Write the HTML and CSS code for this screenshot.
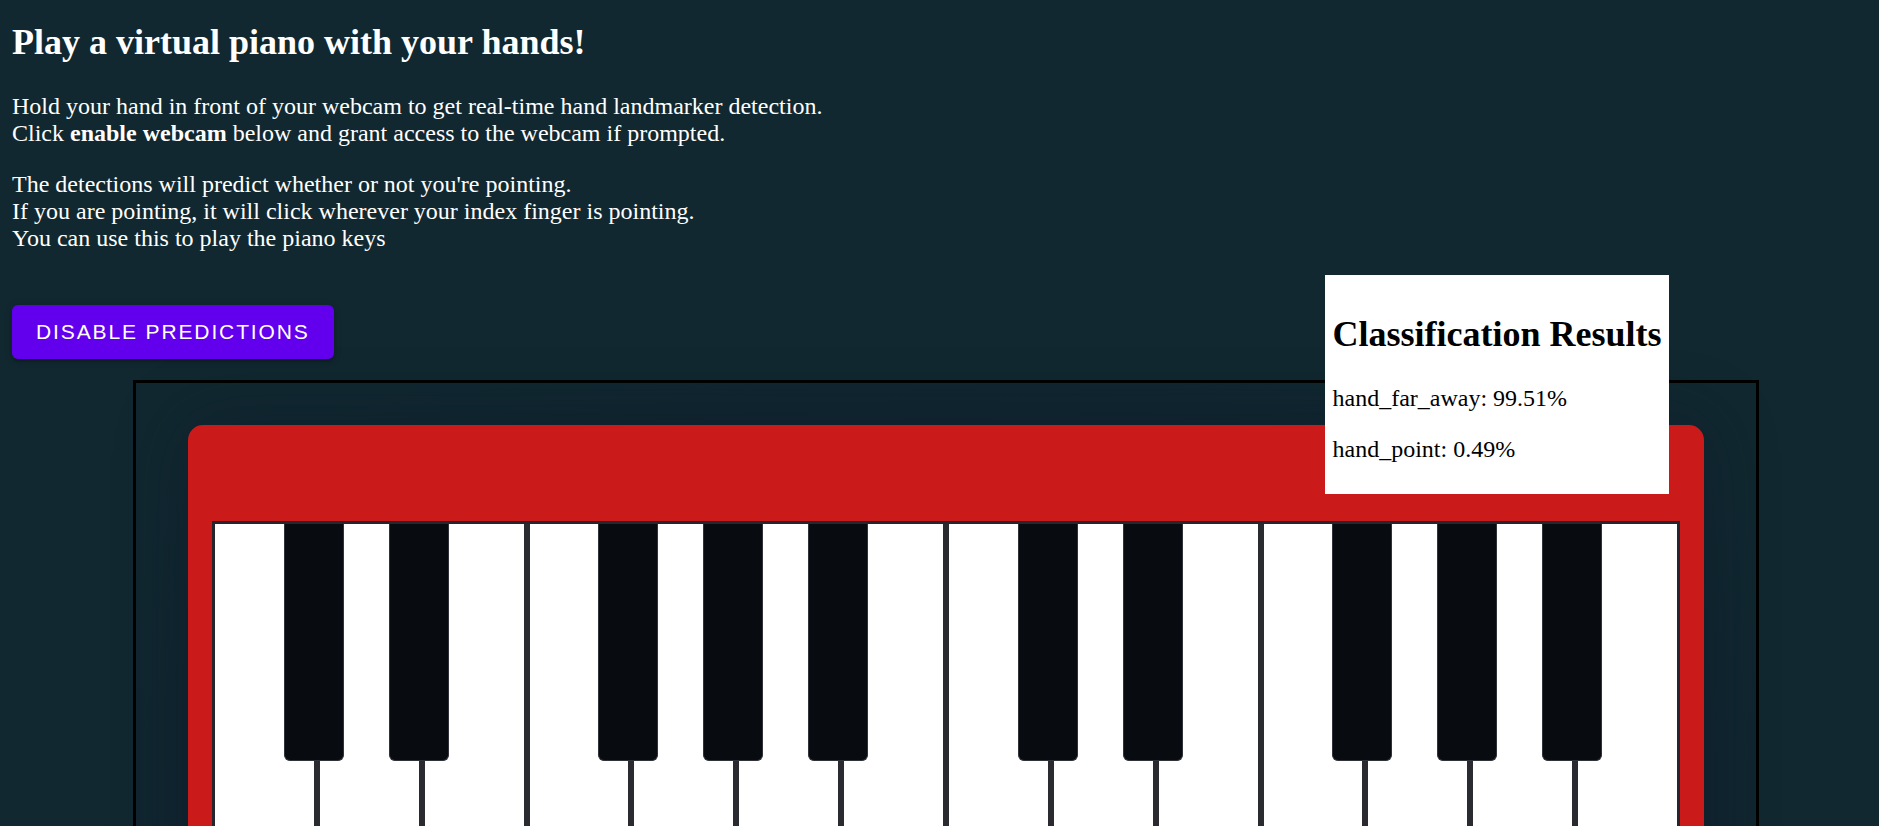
FILE: index.html
```html
<!DOCTYPE html>
<html lang="en">
<head>
<meta charset="utf-8">
<title>Virtual Piano</title>
<link rel="stylesheet" href="styles.css">
</head>
<body>
<main class="page">
  <h2 class="title">Play a virtual piano with your hands!</h2>
  <p class="intro">Hold your hand in front of your webcam to get real-time hand landmarker detection.<br>Click <b>enable webcam</b> below and grant access to the webcam if prompted.</p>
  <p class="intro">The detections will predict whether or not you're pointing.<br>If you are pointing, it will click wherever your index finger is pointing.<br>You can use this to play the piano keys</p>
  <div class="controls">
    <button class="btn">Disable predictions</button>
  </div>
  <section class="stage">
    <div class="piano">
      <div class="keys">
        <div class="white"><span class="black"></span></div>
        <div class="white"><span class="black"></span></div>
        <div class="white"></div>
        <div class="white"><span class="black"></span></div>
        <div class="white"><span class="black"></span></div>
        <div class="white"><span class="black"></span></div>
        <div class="white"></div>
        <div class="white"><span class="black"></span></div>
        <div class="white"><span class="black"></span></div>
        <div class="white"></div>
        <div class="white"><span class="black"></span></div>
        <div class="white"><span class="black"></span></div>
        <div class="white"><span class="black"></span></div>
        <div class="white"></div>
      </div>
    </div>
  </section>
</main>
<aside class="results">
  <h2 class="results-title">Classification Results</h2>
  <p class="result">hand_far_away: 99.51%</p>
  <p class="result">hand_point: 0.49%</p>
</aside>
</body>
</html>
```

FILE: styles.css
```css
html {
  scrollbar-width: none;
  background: #112830;
}
html::-webkit-scrollbar { display: none; }

body {
  margin: 0;
  background: #112830;
  color: #ffffff;
  font-family: "Liberation Serif", "Times New Roman", serif;
  font-size: 24px;
}

.page {
  padding: 0 12px;
}

.title {
  font-size: 36px;
  font-weight: bold;
  margin: 21px 0 30px;
  padding-top: 0;
}

.intro {
  margin: 0 0 24px;
}

.controls {
  margin-top: 53px;
}

.btn {
  display: inline-flex;
  align-items: center;
  height: 54px;
  padding: 0 24px;
  border: none;
  border-radius: 6px;
  background: #6200ee;
  color: #ffffff;
  font-family: "Liberation Sans", Arial, sans-serif;
  font-size: 21px;
  font-weight: 500;
  letter-spacing: 1.875px;
  text-transform: uppercase;
  box-shadow: 0 4px 2px -3px rgba(0,0,0,.2), 0 3px 3px 0 rgba(0,0,0,.14), 0 1px 8px 0 rgba(0,0,0,.12);
  cursor: pointer;
}

.stage {
  margin: 21px 0 0 121px;
  width: 1626px;
  box-sizing: border-box;
  border: 3px solid #000000;
  padding: 42px 52px 0;
  background: radial-gradient(ellipse at 50% 70%, #0f2230 0%, #10242f 55%, #112830 85%);
}

.piano {
  background: #ca1a1a;
  border-radius: 15px 15px 0 0;
  padding: 96px 24px 24px;
  box-shadow: 0 0 70px rgba(10, 22, 40, 0.45);
}

.keys {
  display: flex;
  gap: 6px;
  border: 3px solid #26272e;
  background: #2a2a31;
  height: 420px;
}

.white {
  position: relative;
  flex: 1;
  background: #ffffff;
}

.black {
  position: absolute;
  top: 0;
  right: -30px;
  width: 60px;
  height: 237px;
  box-sizing: border-box;
  background: #080c10;
  border: 1px solid #30333a;
  border-top: none;
  border-radius: 0 0 6px 6px;
  z-index: 1;
}

.results {
  position: absolute;
  left: 1325px;
  top: 275px;
  background: #ffffff;
  color: #000000;
  padding: 7.5px;
}

.results-title {
  font-size: 36px;
  margin: 30px 0;
}

.result {
  margin: 24px 0;
}
```
